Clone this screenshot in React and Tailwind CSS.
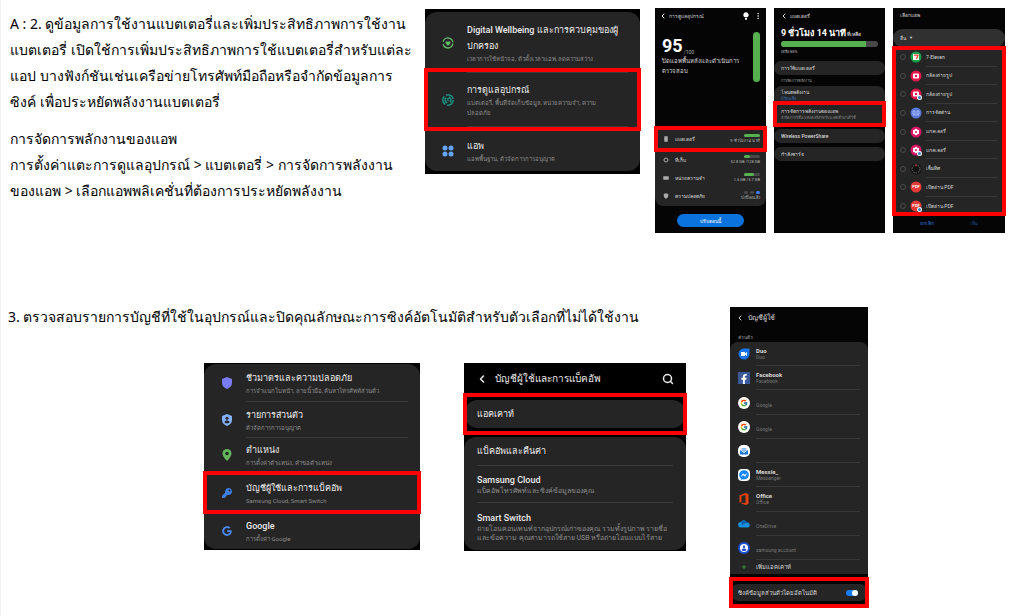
import React, { useState } from 'react';
import { ChevronLeft, Search, Plus, MoreVertical } from 'lucide-react';
import { FcGoogle } from 'react-icons/fc';
import { FaFacebookF, FaFacebookMessenger, FaGoogle, FaKey } from 'react-icons/fa';

const highlight = 'relative z-10 outline-4 outline-solid outline-[#ff0000] -outline-offset-3';

const WellbeingIcon = () => (
  <svg viewBox="0 0 24 24" className="w-3 h-3" fill="none">
    <circle cx="12" cy="12" r="10" stroke="#66bb6a" strokeWidth="2.6" strokeDasharray="27 4.4" transform="rotate(8 12 12)" />
    <path d="M12 17.5 7.4 12.8a2.7 2.7 0 0 1 4.6-3 2.7 2.7 0 0 1 4.6 3z" fill="#66bb6a" />
  </svg>
);

const CareIcon = () => (
  <svg viewBox="0 0 24 24" className="w-3 h-3" fill="none" stroke="#14a390" strokeWidth="2.6">
    <circle cx="12" cy="12" r="10.4" strokeDasharray="18 3.8" />
    <path d="M8.5 7.5a5.6 5.6 0 0 0 2 10M15.5 16.5a5.6 5.6 0 0 0-2-10" />
    <path d="M12 9v4" strokeLinecap="round" />
  </svg>
);

const AppsIcon = () => (
  <svg viewBox="0 0 24 24" className="w-3 h-3" fill="#64a5f6">
    <circle cx="6" cy="6" r="5" />
    <circle cx="18" cy="6" r="5" />
    <circle cx="6" cy="18" r="5" />
    <circle cx="18" cy="18" r="5" />
  </svg>
);

const ShieldIcon = () => (
  <svg viewBox="0 0 24 24" className="w-3 h-3" fill="#7a7cf5">
    <path d="M12 0 22 4v8c0 6-4.5 10-10 12C6.5 22 2 18 2 12V4z" />
  </svg>
);

const PrivacyIcon = () => (
  <svg viewBox="0 0 24 24" className="w-3 h-3">
    <path d="M12 0 22 4v8c0 6-4.5 10-10 12C6.5 22 2 18 2 12V4z" fill="#82b1f8" />
    <circle cx="12" cy="8.5" r="3" fill="#252525" />
    <path d="M7 16.5c0-5 10-5 10 0-1.5 1.8-3 2.3-5 2.3s-3.5-.5-5-2.3z" fill="#252525" />
  </svg>
);

const PinIcon = () => (
  <svg viewBox="0 0 24 24" className="w-3 h-3">
    <path d="M12 0a9 9 0 0 0-9 9c0 6 9 15 9 15s9-9 9-15a9 9 0 0 0-9-9z" fill="#62b55a" />
    <circle cx="12" cy="9" r="3.5" fill="#252525" />
  </svg>
);

// Row of the large settings cards
const SettingRow = ({ icon, title, sub, className = '', line = '' }) => (
  <button type="button" className={`flex w-full items-center text-left ${className}`}>
    <span className="flex w-[46px] shrink-0 justify-center">{icon}</span>
    <span className={`mr-3 flex flex-1 flex-col justify-center self-stretch border-[#3a3a3a] -ml-1 ${line}`}>
      <span className="text-[9px] leading-4 font-medium whitespace-pre-line text-[#ececec]">{title}</span>
      <span className="text-[6px] leading-[10px] whitespace-pre-line text-[#8c8c8c]">{sub}</span>
    </span>
  </button>
);

const SettingsCard = () => (
  <div className="w-[215px] shrink-0 bg-black py-[3px]">
    <div className="rounded-xl bg-[#252525]">
      <SettingRow
        icon={<WellbeingIcon />}
        title={'Digital Wellbeing และการควบคุมของผู้\nปกครอง'}
        sub="เวลาการใช้หน้าจอ, ตัวตั้งเวลาแอพ, ลดความสว่าง"
        className="h-[57px] pt-1"
      />
      <SettingRow
        icon={<CareIcon />}
        title="การดูแลอุปกรณ์"
        sub={'แบตเตอรี่, พื้นที่จัดเก็บข้อมูล, หน่วยความจำ, ความ\nปลอดภัย'}
        className={`h-[61px] py-[3px] ${highlight}`}
        line="border-y"
      />
      <SettingRow icon={<AppsIcon />} title="แอพ" sub="แอพพื้นฐาน, ตัวจัดการการอนุญาต" className="h-[41px]" />
    </div>
  </div>
);

const careItems = [
  { name: 'แบตเตอรี่', note: '9 ชั่วโมง 14 นาที', fill: 'w-full', icon: <rect x="5" y="1" width="14" height="22" rx="2" fill="#aaa" /> },
  { name: 'ที่เก็บ', note: '52.8 GB /128 GB', fill: 'w-2/5', icon: <circle cx="12" cy="12" r="8" fill="none" stroke="#aaa" strokeWidth="4" /> },
  { name: 'หน่วยความจำ', note: '1.6 GB /3.7 GB', fill: 'w-3/5', icon: <rect x="1" y="5" width="22" height="14" rx="1" fill="#aaa" /> },
  { name: 'ความปลอดภัย', note: 'ปกป้องแล้ว', icon: <path d="M12 1l9 3v8c0 5-4 8-9 11-5-3-9-6-9-11V4z" fill="#aaa" /> },
];

const DeviceCarePhone = () => (
  <div className="flex w-[111px] shrink-0 flex-col bg-[#050505] text-white">
    <div className="flex h-4 items-center px-1">
      <button type="button" aria-label="ย้อนกลับ"><ChevronLeft className="w-2 h-2" strokeWidth={3} /></button>
      <span className="ml-[2px] flex-1 text-[5px] leading-3 text-[#cfcfcf]">การดูแลอุปกรณ์</span>
      <svg viewBox="0 0 24 24" className="mr-1 w-2 h-2" fill="#fff">
        <path d="M12 1a8 8 0 0 0-4 15h8a8 8 0 0 0-4-15zM9 18h6v5H9z" />
      </svg>
      <MoreVertical className="w-2 h-2" />
    </div>
    <div className="flex h-[103px] items-start justify-between pt-2 pr-[6px] pl-[7px]">
      <div className="pt-1">
        <div className="flex h-5 items-end text-lg leading-5 font-bold">
          95<span className="ml-px text-[5px] leading-2 font-normal text-[#aaaaaa]">/100</span>
        </div>
        <p className="text-[6px] leading-[10px] text-[#d8d8d8]">ปิดแอพพื้นหลังและดำเนินการ<br />ตรวจสอบ</p>
      </div>
      <div className="h-[50px] w-[7px] rounded-full bg-[#57b04f]" />
    </div>
    <div className="rounded-lg bg-[#252525] pb-px">
      {careItems.map((item, i) => (
        <button
          type="button"
          key={item.name}
          className={`flex w-full items-center pr-[6px] pl-2 text-left ${i === 0 ? `h-6 ${highlight}` : 'h-[18px]'}`}
        >
          <svg viewBox="0 0 24 24" className="w-[6px] h-[6px]">{item.icon}</svg>
          <span className="ml-[6px] flex-1 text-[5px] leading-3 whitespace-nowrap text-[#d8d8d8]">{item.name}</span>
          <span className="flex flex-col items-end">
            {item.fill ? (
              <span className="block h-[3px] w-4 rounded-full bg-[#484848]">
                <span className={`block h-full rounded-full bg-[#57b04f] ${item.fill}`} />
              </span>
            ) : (
              <span className="flex gap-[2px]">
                <span className="h-[3px] w-1 rounded-full bg-[#484848]" />
                <span className="h-[3px] w-1 rounded-full bg-[#484848]" />
                <span className="h-[3px] w-1 rounded-full bg-[#3c7df0]" />
              </span>
            )}
            <span className="text-[4px] leading-2 whitespace-nowrap text-[#b8b8b8]">{item.note}</span>
          </span>
        </button>
      ))}
    </div>
    <button type="button" className="mx-auto mt-2 h-[13px] w-[67px] rounded-full bg-[#0b73dd] text-[5px] leading-3">
      ปรับตอนนี้
    </button>
  </div>
);

const BatteryPhone = () => (
  <div className="flex w-[111px] shrink-0 flex-col bg-[#050505] text-[#d8d8d8]">
    <div className="flex h-4 items-center px-[6px]">
      <button type="button" aria-label="ย้อนกลับ"><ChevronLeft className="w-2 h-2" strokeWidth={3} /></button>
      <span className="ml-[2px] text-[5px] leading-3">แบตเตอรี่</span>
    </div>
    <div className="h-[37px] px-[7px] pt-px">
      <div className="h-4 text-[9px] leading-4 font-bold whitespace-nowrap text-white">
        9 ชั่วโมง 14 นาที<span className="ml-px text-[5px] font-normal">ที่เหลือ</span>
      </div>
      <div className="h-[6px] overflow-hidden rounded-full bg-[#484848]">
        <div className="h-full w-[88%] bg-[#57b04f]" />
      </div>
      <div className="text-[4px] leading-[10px] text-[#aaaaaa]">เหลือ 88%</div>
    </div>
    <button type="button" className="h-[14px] rounded-full bg-[#252525] px-[7px] text-left text-[5px] leading-3">การใช้แบตเตอรี่</button>
    <div className="h-[11px] px-[7px] text-[4px] leading-3 text-[#999999]">การจัดการพลังงาน</div>
    <button type="button" className="h-4 rounded-t-lg bg-[#252525] px-[7px] text-left">
      <span className="block pt-px text-[5px] leading-2">โหมดพลังงาน</span>
      <span className="block text-[4px] leading-[6px] text-[#3579c8]">ปรับแล้ว</span>
    </button>
    <div className={highlight}>
      <button type="button" className="h-[23px] w-full rounded-b-lg bg-[#252525] px-[7px] text-left">
        <span className="block text-[5px] leading-2">การจัดการพลังงานของแอพ</span>
        <span className="block text-[4px] leading-[6px] whitespace-nowrap text-[#888888]">จำกัดการใช้แบตเตอรี่สำหรับแอพที่ไม่ได้ใช้</span>
      </button>
    </div>
    <button type="button" className="mt-[3px] h-[14px] rounded-full bg-[#252525] px-[7px] text-left text-[5px] leading-3 font-medium">Wireless PowerShare</button>
    <button type="button" className="mt-1 h-[14px] rounded-full bg-[#252525] px-[7px] text-left text-[5px] leading-3">กำลังชาร์จ</button>
  </div>
);

const CameraGlyph = () => (
  <>
    <rect x="6" y="7" width="12" height="10" rx="2" fill="#fff" />
    <circle cx="12" cy="12" r="2.5" fill="#e3174b" />
  </>
);

const FlowerGlyph = () => (
  <g fill="#fff">
    <circle cx="12" cy="8" r="2.6" />
    <circle cx="12" cy="16" r="2.6" />
    <circle cx="8.3" cy="10" r="2.6" />
    <circle cx="15.7" cy="10" r="2.6" />
    <circle cx="8.3" cy="14" r="2.6" />
    <circle cx="15.7" cy="14" r="2.6" />
    <circle cx="12" cy="12" r="1.4" fill="#d81563" />
  </g>
);

const PdfGlyph = () => (
  <text x="12" y="14" textAnchor="middle" fontSize="8" fontWeight="bold" fill="#fff">PDF</text>
);

const Badge = () => (
  <>
    <circle cx="19" cy="19" r="5" fill="#fff" />
    <circle cx="19" cy="19" r="3" fill="#3b7cc4" />
  </>
);

const apps = [
  { name: '7-Eleven', color: '#15a34a', glyph: <><rect x="6" y="6" width="12" height="12" fill="#fff" /><path d="M8 8h8l-3 8" stroke="#e53e2d" strokeWidth="2.5" fill="none" /></> },
  { name: 'กล้องถ่ายรูป', color: '#e3174b', glyph: <CameraGlyph /> },
  { name: 'กล้องถ่ายรูป', color: '#e3174b', glyph: <CameraGlyph />, badge: true },
  { name: 'การจัดด่าน', color: '#5877d8', glyph: <path d="M6 8h4v6H6zM14 8h4v6h-4zM6 16h12" stroke="#bccbff" strokeWidth="1.5" fill="none" /> },
  { name: 'แกลเลอรี่', color: '#d81563', glyph: <FlowerGlyph /> },
  { name: 'แกลเลอรี่', color: '#d81563', glyph: <FlowerGlyph />, badge: true },
  { name: 'เข็มทิศ', color: '#111111', glyph: <><circle cx="12" cy="12" r="8" fill="none" stroke="#999" strokeWidth="1.5" strokeDasharray="3 2" /><path d="M12 3v4" stroke="#e33" strokeWidth="2" /></> },
  { name: 'เปิดอ่าน PDF', color: '#e23b36', glyph: <PdfGlyph /> },
  { name: 'เปิดอ่าน PDF', color: '#e23b36', glyph: <PdfGlyph />, badge: true },
];

const AppPickerPhone = () => (
  <div className="flex w-28 shrink-0 flex-col bg-[#050505] text-[#d8d8d8]">
    <div className="h-[21px] px-[7px] text-[5px] leading-[14px]">เลือกแอพ</div>
    <label className="relative flex h-[18px] items-center rounded-full bg-[#303030] px-[7px] text-[5px]">
      <select aria-label="ตัวกรอง" className="w-full appearance-none bg-transparent leading-3">
        <option>อื่น</option>
      </select>
      <span className="pointer-events-none absolute left-4 text-[4px]">▼</span>
    </label>
    <ul className={`flex h-[168px] flex-col bg-[#252525] pt-px ${highlight}`}>
      {apps.map((app, i) => (
        <li key={i} className="flex-1">
          <label className="flex h-full items-center pl-[7px]">
            <input type="checkbox" className="h-[6px] w-[6px] appearance-none rounded-full border border-[#4a4a4a]" />
            <svg viewBox="0 0 24 24" className="ml-1 w-3 h-3">
              <circle cx="12" cy="12" r="11" fill={app.color} />
              {app.glyph}
              {app.badge && <Badge />}
            </svg>
            <span className={`mr-2 ml-1 flex flex-1 items-center self-stretch border-[#383838] text-[5px] leading-3 ${i < 8 ? 'border-b' : ''}`}>
              {app.name}
            </span>
          </label>
        </li>
      ))}
    </ul>
    <div className="flex h-[18px] items-center justify-center gap-9 text-[5px]">
      <button type="button" className="text-[#2f78dd]">ยกเลิก</button>
      <button type="button" className="text-[#1b447d]">เพิ่ม</button>
    </div>
  </div>
);

const PrivacyCard = () => (
  <div className="w-[216px] shrink-0 bg-black py-px">
    <div className="rounded-xl bg-[#252525]">
      <SettingRow icon={<ShieldIcon />} title="ชีวมาตรและความปลอดภัย" sub="การจำแนกใบหน้า, ลายนิ้วมือ, ค้นหาโทรศัพท์ส่วนตัว" className="h-[38px]" line="border-b" />
      <SettingRow icon={<PrivacyIcon />} title="รายการส่วนตัว" sub="ตัวจัดการการอนุญาต" className="h-9" line="border-b" />
      <SettingRow icon={<PinIcon />} title="ตำแหน่ง" sub="การตั้งค่าตำแหน่ง, คำขอตำแหน่ง" className="h-[34px]" />
      <SettingRow icon={<FaKey className="w-[10px] h-[10px] text-[#3f7de0]" />} title="บัญชีผู้ใช้และการแบ็คอัพ" sub="Samsung Cloud, Smart Switch" className={`h-[41px] ${highlight}`} />
      <SettingRow icon={<FaGoogle className="w-[10px] h-[10px] text-[#4a8af4]" />} title="Google" sub="การตั้งค่า Google" className="h-9" />
    </div>
  </div>
);

const BackupItem = ({ title, sub, className }) => (
  <button type="button" className={`mx-[13px] flex flex-col justify-center border-[#3a3a3a] text-left ${className}`}>
    <span className="text-[9px] leading-[14px] font-medium">{title}</span>
    {sub && <span className="text-[7px] leading-[9px] whitespace-pre text-[#8c8c8c]">{sub}</span>}
  </button>
);

const BackupPanel = () => (
  <div className="flex w-[222px] shrink-0 flex-col bg-black pb-px text-[#ececec]">
    <div className="flex h-[31px] items-center px-3">
      <button type="button" aria-label="ย้อนกลับ"><ChevronLeft className="w-3 h-3" strokeWidth={3} /></button>
      <h2 className="ml-[7px] flex-1 text-[10px] leading-4 font-medium">บัญชีผู้ใช้และการแบ็คอัพ</h2>
      <button type="button" aria-label="ค้นหา"><Search className="w-3 h-3" strokeWidth={3} /></button>
    </div>
    <div className={`py-[6px] ${highlight}`}>
      <button type="button" className="block h-7 w-full rounded-full bg-[#252525] px-[13px] text-left text-[9px] leading-4 font-medium">แอคเคาท์</button>
    </div>
    <div className="mt-[3px] flex flex-col rounded-xl bg-[#252525]">
      <BackupItem title="แบ็คอัพและคืนค่า" className="h-[29px] border-b" />
      <BackupItem title="Samsung Cloud" sub="แบ็คอัพโทรศัพท์และซิงค์ข้อมูลของคุณ" className="h-[37px] border-b" />
      <BackupItem
        title="Smart Switch"
        sub={'ถ่ายโอนคอนเทนท์จากอุปกรณ์เก่าของคุณ รวมทั้งรูปภาพ รายชื่อ\nและข้อความ คุณสามารถใช้สาย USB หรือถ่ายโอนแบบไร้สาย'}
        className="h-[47px]"
      />
    </div>
  </div>
);

const accounts = [
  { name: 'Duo', type: 'Duo', icon: <svg viewBox="0 0 24 24" className="w-3 h-3"><path d="M12 1h11v11A11 11 0 1 1 12 1z" fill="#1a73e8" /><path d="M6 8h8v3l4-3v8l-4-3v3H6z" fill="#fff" /></svg> },
  { name: 'Facebook', type: 'Facebook', icon: <span className="flex h-3 w-3 items-end justify-center bg-[#3b5998]"><FaFacebookF className="w-[10px] h-[10px] text-white" /></span> },
  { name: '', type: 'Google', icon: <span className="rounded-full bg-white p-[2px]"><FcGoogle className="w-2 h-2" /></span> },
  { name: '', type: 'Google', icon: <span className="rounded-full bg-white p-[2px]"><FcGoogle className="w-2 h-2" /></span> },
  { name: '', type: '', icon: <svg viewBox="0 0 24 24" className="w-3 h-3"><rect width="24" height="24" rx="10" fill="#fff" /><path d="M4 10l8 6 8-6v9H4z" fill="#1976d2" /><path d="M7 6h10v5l-5 4-5-4z" fill="#8fc3f5" /></svg> },
  { name: 'Messie_', type: 'Messenger', icon: <span className="rounded-sm bg-white p-px"><FaFacebookMessenger className="w-[10px] h-[10px] text-[#1588ff]" /></span> },
  { name: 'Office', type: 'Office', icon: <svg viewBox="0 0 24 24" className="w-3 h-3"><path d="M15 0 3 4.5v15l4-2V6.5L15 4v16L4 19.5 15 24l6-2V2z" fill="#e2400f" /></svg> },
  { name: '', type: 'OneDrive', icon: <svg viewBox="0 0 24 24" className="w-3 h-3"><path d="M6 19a5.5 5.5 0 0 1-.5-11A7 7 0 0 1 18 9a5 5 0 0 1 1 10z" fill="#1490df" /><path d="M5.5 8A7 7 0 0 1 18 9L9 14z" fill="#0f5fb0" /></svg> },
  { name: '', type: 'samsung account', icon: <svg viewBox="0 0 24 24" className="w-3 h-3"><circle cx="12" cy="12" r="12" fill="#1c4ed0" /><circle cx="12" cy="12" r="8" fill="#fff" /><circle cx="12" cy="9.5" r="2.5" fill="#1c4ed0" /><path d="M7 16c1-4 9-4 10 0-2 3-8 3-10 0z" fill="#1c4ed0" /></svg> },
];

const AccountsPhone = () => {
  const [sync, setSync] = useState(true);

  return (
    <div className="flex w-[138px] shrink-0 flex-col bg-[#050505] text-[#d8d8d8]">
      <div className="flex h-[22px] items-center px-[6px]">
        <button type="button" aria-label="ย้อนกลับ"><ChevronLeft className="w-2 h-2" strokeWidth={3} /></button>
        <span className="ml-1 text-[7px] leading-3">บัญชีผู้ใช้</span>
      </div>
      <div className="h-[13px] px-2 text-[5px] leading-4 text-[#999999]">ส่วนตัว</div>
      <div className="flex h-[232px] flex-col rounded-t-lg bg-[#252525]">
        {accounts.map((item, i) => (
          <button type="button" key={i} aria-label={item.type || 'อีเมล'} className="flex flex-1 items-center pl-2 text-left">
            <span className="flex w-3 justify-center">{item.icon}</span>
            <span className="mr-2 ml-[6px] flex flex-1 flex-col justify-center self-stretch border-b border-[#383838]">
              <span className="h-[7px] text-[6px] leading-[7px] font-bold">{item.name}</span>
              <span className="h-[7px] text-[5px] leading-[7px] text-[#777777]">{item.type}</span>
            </span>
          </button>
        ))}
        <button type="button" className="flex h-[14px] items-center pl-2 text-[6px] leading-3">
          <span className="flex w-3 justify-center"><Plus className="w-[6px] h-[6px] text-[#3fae3a]" strokeWidth={3} /></span>
          <span className="ml-[6px]">เพิ่มแอคเคาท์</span>
        </button>
      </div>
      <div className={`mt-1 py-[6px] ${highlight}`}>
        <label className="flex h-[17px] items-center justify-between rounded-full bg-[#252525] pr-[10px] pl-2 text-[6px] leading-3">
          ซิงค์ข้อมูลส่วนตัวโดยอัตโนมัติ
          <input
            type="checkbox"
            role="switch"
            checked={sync}
            onChange={(e) => setSync(e.target.checked)}
            className="flex h-[6px] w-3 appearance-none items-center justify-start rounded-full bg-[#555555] before:h-[6px] before:w-[6px] before:rounded-full before:bg-white checked:justify-end checked:bg-[#1b7cf2]"
          />
        </label>
      </div>
    </div>
  );
};

const App = () => (
  <main className="min-h-screen bg-white border-l border-gray-100 font-['Noto_Sans',sans-serif] text-black">
    {/* Battery usage */}
    <section className="flex items-start pt-2 pr-[7px] pl-[9px]">
      <div className="flex-1 pt-[3px] text-sm leading-[26px] whitespace-nowrap">
        <p>
          A : 2. ดูข้อมูลการใช้งานแบตเตอรี่และเพิ่มประสิทธิภาพการใช้งาน<br />
          แบตเตอรี่ เปิดใช้การเพิ่มประสิทธิภาพการใช้แบตเตอรี่สำหรับแต่ละ<br />
          แอป บางฟังก์ชันเช่นเครือข่ายโทรศัพท์มือถือหรือจำกัดข้อมูลการ<br />
          ซิงค์ เพื่อประหยัดพลังงานแบตเตอรี่
        </p>
        <p className="mt-[11px]">
          การจัดการพลักงานของแอพ<br />
          การตั้งค่าแตะการดูแลอุปกรณ์ &gt; แบตเตอรี่ &gt; การจัดการพลังงาน<br />
          ของแอพ &gt; เลือกแอพพลิเคชั่นที่ต้องการประหยัดพลังงาน
        </p>
      </div>
      <div className="flex items-start gap-[15px] font-['Roboto','Noto_Sans',sans-serif]">
        <div className="pt-px"><SettingsCard /></div>
        <div className="flex h-[225px] gap-2">
          <DeviceCarePhone />
          <BatteryPhone />
          <AppPickerPhone />
        </div>
      </div>
    </section>

    {/* Account sync */}
    <section className="mt-[74px] flex items-start justify-between pr-36 pl-[7px]">
      <div>
        <p className="text-sm leading-5 whitespace-nowrap">
          3. ตรวจสอบรายการบัญชีที่ใช้ในอุปกรณ์และปิดคุณลักษณะการซิงค์อัตโนมัติสำหรับตัวเลือกที่ไม่ได้ใช้งาน
        </p>
        <div className="mt-9 flex items-start gap-11 pl-[196px] font-['Roboto','Noto_Sans',sans-serif]">
          <PrivacyCard />
          <BackupPanel />
        </div>
      </div>
      <div className="font-['Roboto','Noto_Sans',sans-serif]"><AccountsPhone /></div>
    </section>
  </main>
);

export default App;
